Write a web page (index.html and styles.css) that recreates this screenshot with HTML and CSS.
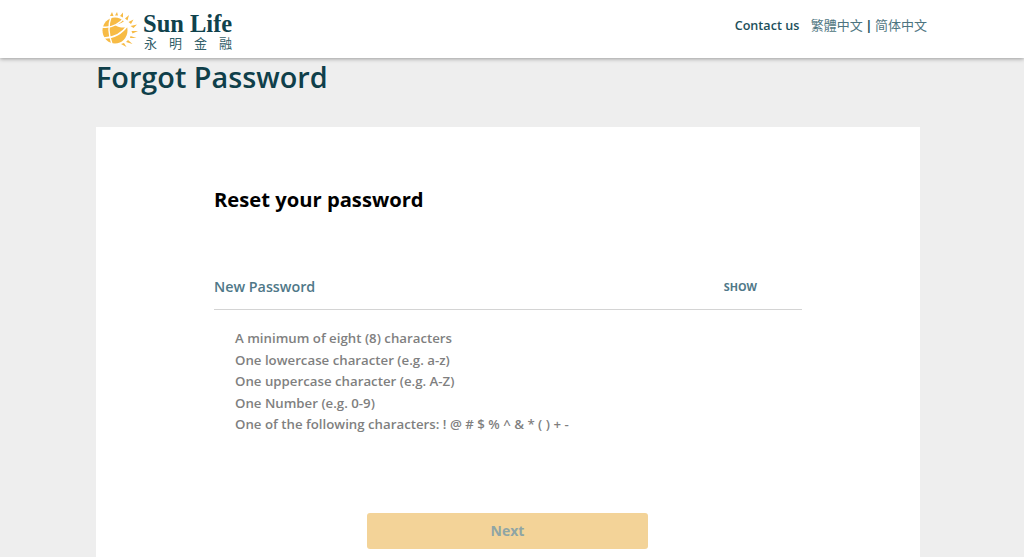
FILE: index.html
```html
<!DOCTYPE html>
<html lang="en">

<head>
    <meta charset="UTF-8">
    <meta name="viewport" content="width=device-width, initial-scale=1.0">
    <title>Forgot Password</title>
    <link rel="stylesheet" href="styles.css">
</head>

<body>
    <div class="navbar">
        <a class="logo" href="javascript:void(0);">
            <svg class="logo-sun" viewBox="0 0 36 36" width="36" height="36">
                <!-- globe -->
                <ellipse cx="13" cy="18.500" rx="12.500" ry="13" fill="#f7bb45"/>
                <g fill="none" stroke="#fff" stroke-width="1.400">
                    <path d="M0 15c7 1 15 0 23-10"/>
                    <path d="M2 26c8 0 17-3 24-13"/>
                    <path d="M9 5c-3 8-3 16 1 27"/>
                </g>
                <!-- white wedge across the top right -->
                <path d="M13 13c5-1 9-3 12-7l1 9c-4 1-9 1-13-2z" fill="#fff"/>
                <!-- rays -->
                <g fill="#f7bb45">
                    <path d="M8 4l2-4 1.500 4z"/>
                    <path d="M13 3.500l2-3.500 1 3.500z"/>
                    <path d="M18 4l3-3.500 0 5z"/>
                    <path d="M23 6.500l4-3.500-1.500 5.500z"/>
                    <path d="M26.500 10l5-2.500-2.500 4.500z"/>
                    <path d="M28.500 14l6.500-1.500-3.500 3.500z"/>
                    <path d="M29.500 19l6.500 0-5.500 2.500z"/>
                    <path d="M28.500 24l6 2-6.500 0z"/>
                    <path d="M26 28l4.500 4-6.500-2z"/>
                    <path d="M22 31l2.500 4-5.500-3z"/>
                </g>
            </svg>
            <span class="logo-text">
                <span class="logo-en">Sun Life</span>
                <span class="logo-zh">永明金融</span>
            </span>
        </a>
        <div class="nav-links">
            <a class="contact" href="javascript:void(0);">Contact us</a>
            <span class="langs">
                <a href="javascript:void(0);">繁體中文</a>
                <span class="sep">|</span>
                <a href="javascript:void(0);">简体中文</a>
            </span>
        </div>
    </div>

    <div class="container">
        <h1>Forgot Password</h1>

        <div class="card">
            <h2>Reset your password</h2>

            <div class="field">
                <span class="field-label">New Password</span>
                <a class="show-link" href="javascript:void(0);">SHOW</a>
            </div>

            <ul class="rules">
                <li>A minimum of eight (8) characters</li>
                <li>One lowercase character (e.g. a-z)</li>
                <li>One uppercase character (e.g. A-Z)</li>
                <li>One Number (e.g. 0-9)</li>
                <li>One of the following characters: ! @ # $ % ^ &amp; * ( ) + -</li>
            </ul>

            <button class="next-button" disabled>Next</button>
        </div>
    </div>
</body>

</html>
```

FILE: styles.css
```css
* {
    box-sizing: border-box;
}

html,
body {
    height: 100%;
}

body {
    margin: 0;
    font-family: "Open Sans", "Noto Sans", "Noto Sans CJK TC", sans-serif;
    background-color: #eeeeee;
    color: #0f3f4a;
    overflow: hidden;
}

a {
    color: inherit;
    text-decoration: none;
}

.navbar {
    display: flex;
    justify-content: space-between;
    align-items: flex-start;
    height: 58px;
    padding: 0 97px 0 102px;
    background-color: white;
    box-shadow: 0 1px 4px rgba(0, 0, 0, 0.35);
}

.logo {
    display: flex;
    align-items: flex-start;
    margin-top: 11px;
}

.logo-sun {
    margin-top: 1px;
    flex-shrink: 0;
}

.logo-text {
    display: flex;
    flex-direction: column;
    margin-left: 5px;
}

.logo-en {
    font-family: "Liberation Serif", serif;
    font-size: 24.500px;
    font-weight: bold;
    line-height: 25px;
    color: #10424d;
}

.logo-zh {
    font-family: "Noto Sans CJK TC", sans-serif;
    font-size: 13px;
    line-height: 13px;
    letter-spacing: 12px;
    margin-left: 1px;
    white-space: nowrap;
    color: #33606a;
}

.nav-links {
    display: flex;
    align-items: center;
    gap: 11.500px;
    margin-top: 14px;
    font-size: 13px;
    line-height: 20px;
}

.contact {
    margin-top: 2px;
    font-size: 12.600px;
    font-weight: 600;
    color: #1c4f5b;
}

.langs {
    display: flex;
    gap: 2.500px;
    color: #4d7480;
}

.sep {
    color: #1c4f5b;
    font-weight: 700;
}

.container {
    width: 824px;
    margin-left: 96px;
}

h1 {
    margin: 0;
    height: 69px;
    font-size: 28.800px;
    font-weight: 600;
    line-height: 38px;
    color: #0f3f4a;
}

.card {
    height: 500px;
    padding: 59px 118px 0;
    background-color: white;
}

h2 {
    margin: 0;
    font-size: 20.200px;
    font-weight: 700;
    line-height: 26px;
    color: #000000;
}

.field {
    display: flex;
    justify-content: space-between;
    align-items: center;
    height: 46px;
    margin-top: 52px;
    padding-right: 45px;
    border-bottom: 1px solid #d4d4d4;
}

.field-label {
    font-size: 14.300px;
    font-weight: 600;
    color: #4f7888;
}

.show-link {
    font-size: 10.800px;
    font-weight: 700;
    color: #4f7888;
}

.rules {
    list-style: none;
    margin: 18px 0 0;
    padding: 0 0 0 21px;
    font-size: 13.250px;
    font-weight: 600;
    line-height: 21.500px;
    color: #7f7f7f;
}

.next-button {
    display: block;
    width: 281px;
    height: 36px;
    margin: 77px 0 0 153px;
    padding-top: 1px;
    border: none;
    border-radius: 3px;
    background-color: #f3d398;
    color: #8fa5a5;
    font-family: inherit;
    font-size: 14px;
    font-weight: 700;
}
```
